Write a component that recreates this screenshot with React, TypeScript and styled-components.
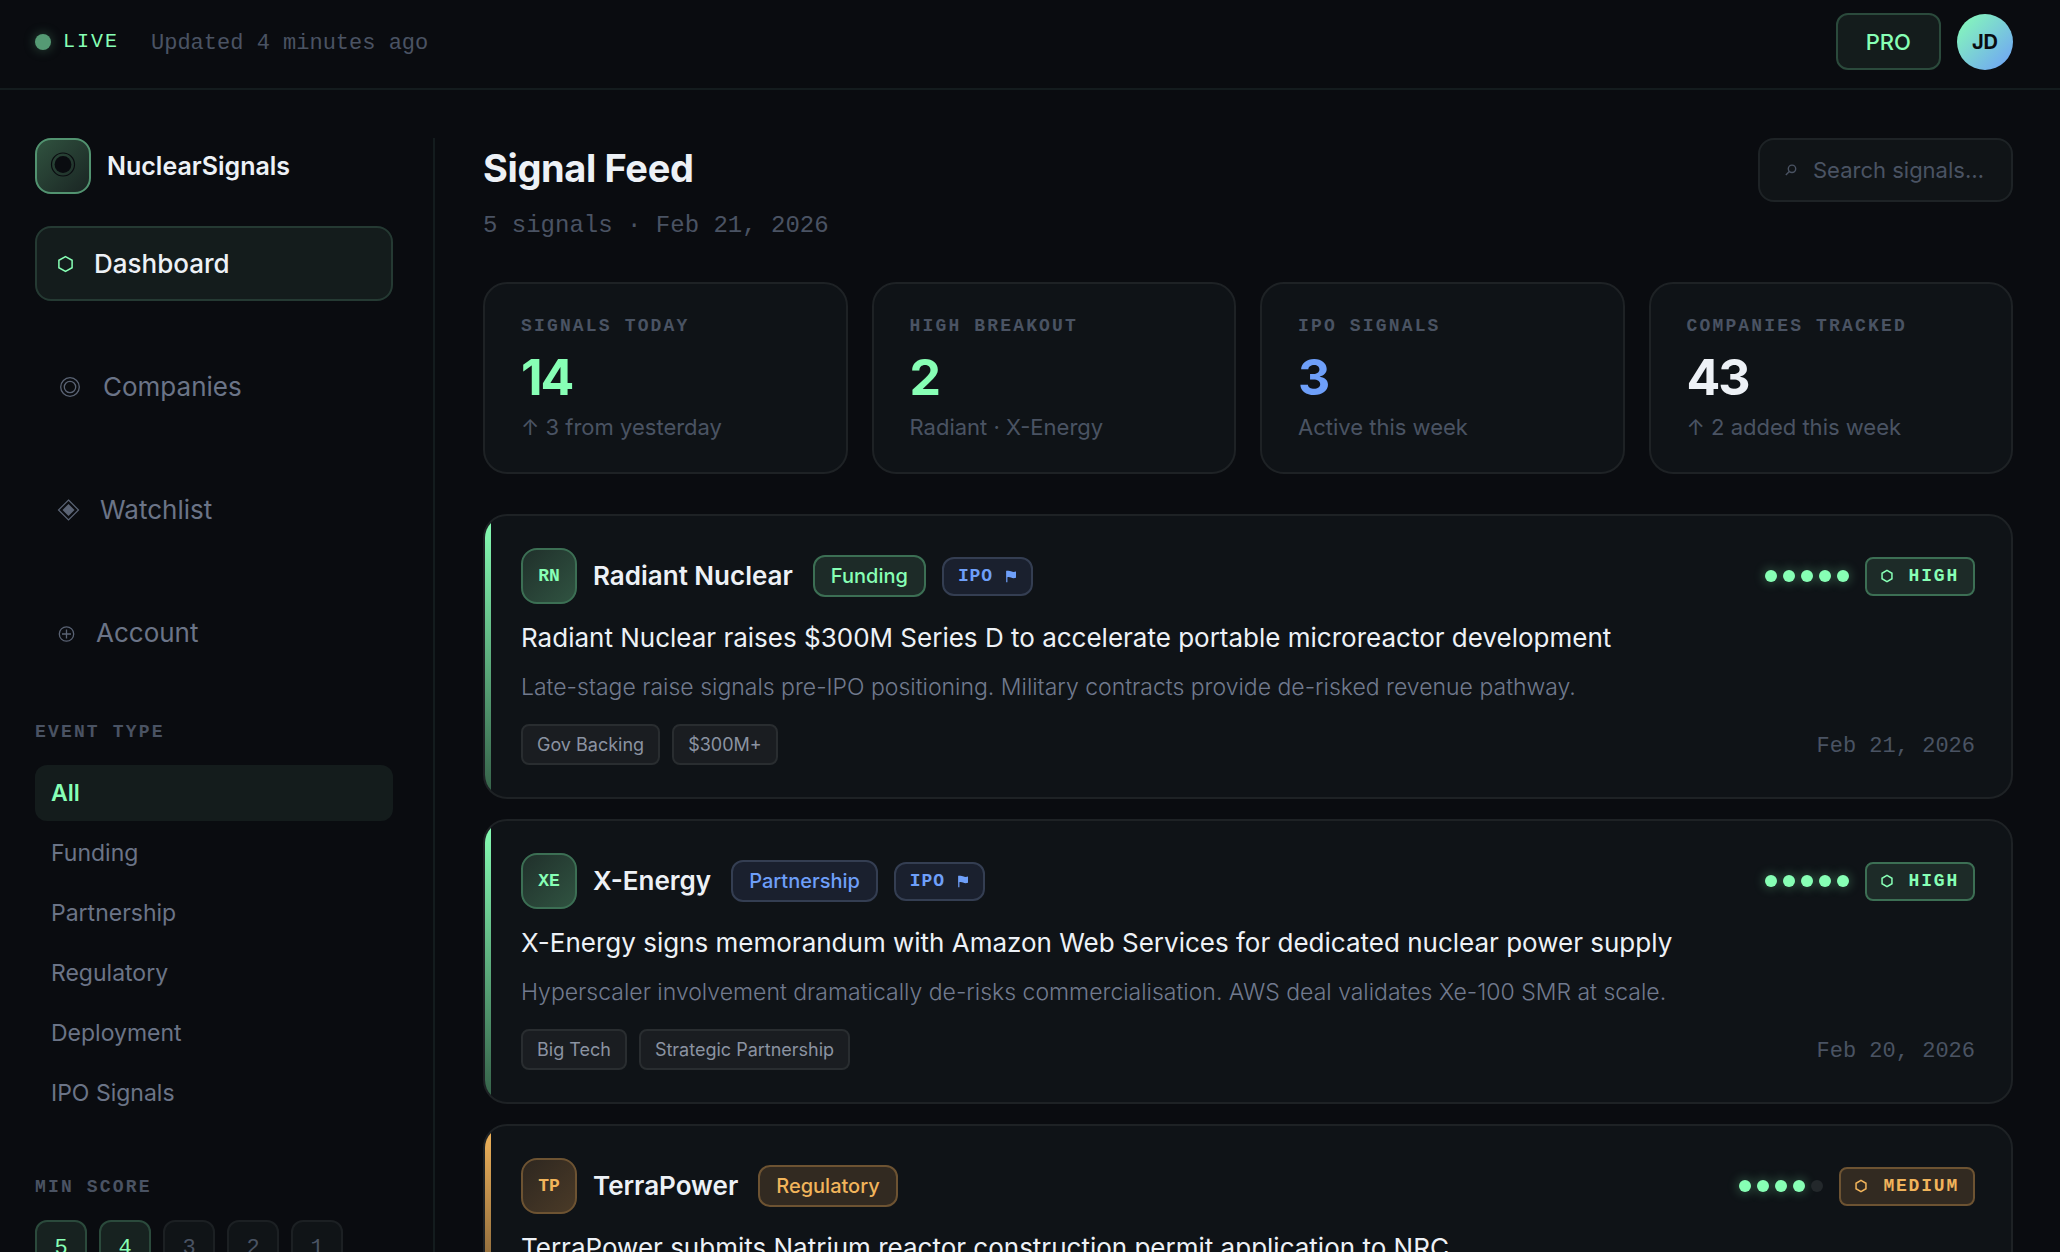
import React, { useState } from "react";
import styled, { createGlobalStyle, css } from "styled-components";

const color = {
  bg: "#0a0c10",
  card: "#0f1317",
  cardBorder: "#1e2225",
  line: "#141c1e",
  text: "#edf1f6",
  muted: "#6b7487",
  dim: "#4a5363",
  green: "#87ffb5",
  blue: "#6e9ff9",
  amber: "#f1b45b",
};

const sans = `Inter, "Open Sans", sans-serif`;
const mono = `"Liberation Mono", "DejaVu Sans Mono", monospace`;

type Tone = "green" | "blue" | "amber";

const tones: Record<Tone, { fg: string; bg: string; border: string }> = {
  green: { fg: color.green, bg: "#1d2b28", border: "#3c6f54" },
  blue: { fg: color.blue, bg: "#1a202e", border: "#343e52" },
  amber: { fg: color.amber, bg: "#322a21", border: "#6d5332" },
};

const GlobalStyle = createGlobalStyle`
  *, *::before, *::after { box-sizing: border-box; }
  body { margin: 0; background: ${color.bg}; color: ${color.text}; font-family: ${sans}; }
  button, input { font: inherit; color: inherit; }
  h1, h2, h3, p, ul { margin: 0; padding: 0; }
  ul { list-style: none; }
`;

const Shell = styled.div`
  display: grid;
  grid-template-rows: auto 1fr;
  height: 100vh;
  overflow: hidden;
`;

const TopBar = styled.header`
  display: flex;
  align-items: center;
  justify-content: space-between;
  padding: 13px 47px 18px 35px;
  border-bottom: 2px solid ${color.line};
`;

const Status = styled.div`
  display: flex;
  align-items: center;
  gap: 32px;
`;

const Live = styled.span`
  display: flex;
  align-items: center;
  gap: 12px;
  font: 400 20px/24px ${mono};
  letter-spacing: 0.1em;
  color: ${color.green};
`;

const LiveDot = styled.i`
  width: 16px;
  height: 16px;
  border-radius: 50%;
  background: #559a74;
  box-shadow: 0 0 12px rgba(85, 154, 116, 0.45);
`;

const Updated = styled.span`
  padding-top: 4px;
  font: 400 22px/24px ${mono};
  color: ${color.dim};
`;

const UserArea = styled.div`
  display: flex;
  align-items: center;
  gap: 16px;
`;

const PlanButton = styled.button`
  height: 57px;
  padding: 0 28px;
  border: 2px solid #2b4a3c;
  border-radius: 12px;
  background: #141c1c;
  color: ${color.green};
  font-size: 22px;
  font-weight: 500;
`;

const UserAvatar = styled.button`
  width: 56px;
  height: 56px;
  padding: 0;
  border: 0;
  border-radius: 50%;
  background: linear-gradient(135deg, ${color.green}, ${color.blue});
  color: ${color.bg};
  font-size: 20px;
  font-weight: 700;
`;

const Body = styled.div`
  display: grid;
  grid-template-columns: 400px 1fr;
  min-height: 0;
  padding: 48px 47px 0 35px;
`;

const Sidebar = styled.aside`
  padding-right: 40px;
  border-right: 2px solid ${color.line};
  overflow: hidden;
`;

const Brand = styled.div`
  display: flex;
  align-items: center;
  gap: 16px;
  margin-bottom: 32px;
  font-size: 25px;
  font-weight: 600;
`;

const BrandMark = styled.span`
  display: grid;
  place-items: center;
  width: 56px;
  height: 56px;
  border: 2px solid #529370;
  border-radius: 16px;
  background: linear-gradient(135deg, #30523f, #1a2523);
`;

const Nav = styled.nav`
  display: flex;
  flex-direction: column;
  gap: 48px;
  margin-bottom: 48px;
`;

const NavLink = styled.a<{ $active?: boolean }>`
  display: flex;
  align-items: center;
  gap: 20px;
  height: 75px;
  padding: 0 20px;
  border: 2px solid transparent;
  border-radius: 16px;
  color: ${color.muted};
  font-size: 26px;
  line-height: 32px;
  text-decoration: none;

  svg {
    color: #5a6374;
  }

  ${(p) =>
    p.$active &&
    css`
      border-color: #253a33;
      background: #141c1c;
      color: ${color.text};
      font-weight: 500;

      svg {
        color: ${color.green};
      }
    `}
`;

const Overline = styled.h2`
  padding-top: 2px;
  font: 700 18px/25px ${mono};
  letter-spacing: 0.12em;
  color: ${color.dim};
`;

const FilterGroup = styled.section`
  display: flow-root;
  margin-bottom: 48px;

  ${Overline} {
    margin-bottom: 20px;
  }
`;

const FilterButton = styled.button<{ $active: boolean }>`
  display: block;
  width: 100%;
  height: 56px;
  margin-bottom: 4px;
  padding: 0 16px;
  border: 0;
  border-radius: 12px;
  background: ${(p) => (p.$active ? "#141c1c" : "transparent")};
  color: ${(p) => (p.$active ? color.green : color.muted)};
  font-size: 23px;
  font-weight: ${(p) => (p.$active ? 600 : 400)};
  text-align: left;
`;

const Scores = styled.div`
  display: flex;
  gap: 12px;
`;

const ScoreButton = styled.button<{ $active: boolean }>`
  width: 52px;
  height: 56px;
  padding: 0;
  border: 2px solid ${(p) => (p.$active ? "#2b4a3c" : "#1c2023")};
  border-radius: 12px;
  background: ${(p) => (p.$active ? "#172220" : "#101417")};
  color: ${(p) => (p.$active ? color.green : color.dim)};
  font-family: ${mono};
  font-size: 22px;
`;

const Main = styled.main`
  min-width: 0;
  padding-left: 48px;
  overflow: hidden;
`;

const PageHead = styled.div`
  display: flex;
  align-items: flex-start;
  justify-content: space-between;
  margin-bottom: 36px;
`;

const Title = styled.h1`
  margin-bottom: 8px;
  font-size: 38px;
  font-weight: 700;
  line-height: 60px;
  letter-spacing: -0.01em;
`;

const Subtitle = styled.p`
  font: 400 24px/40px ${mono};
  color: ${color.dim};
`;

const SearchBox = styled.label`
  display: flex;
  align-items: center;
  gap: 16px;
  height: 64px;
  padding: 0 22px 0 24px;
  border: 2px solid #1e2326;
  border-radius: 16px;
  background: #101417;
  color: ${color.dim};

  input {
    width: 176px;
    padding: 0;
    border: 0;
    outline: 0;
    background: none;
    color: ${color.text};
    font-size: 22px;
  }

  input::placeholder {
    color: ${color.dim};
    opacity: 1;
  }
`;

const Stats = styled.section`
  display: grid;
  grid-template-columns: repeat(4, 1fr);
  gap: 24px;
  margin-bottom: 40px;
`;

const StatCard = styled.article`
  padding: 28px 36px;
  border: 2px solid ${color.cardBorder};
  border-radius: 24px;
  background: ${color.card};
`;

const StatValue = styled.p<{ $color: string }>`
  margin: 12px 0 8px;
  color: ${(p) => p.$color};
  font-size: 50px;
  font-weight: 700;
  line-height: 52px;
  letter-spacing: -0.04em;
`;

const StatNote = styled.p`
  color: ${color.dim};
  font-size: 22px;
  line-height: 33px;
`;

const Feed = styled.section`
  display: flex;
  flex-direction: column;
  gap: 20px;
`;

const SignalCard = styled.article<{ $tone: Tone }>`
  position: relative;
  padding: 32px 36px;
  border: 2px solid ${color.cardBorder};
  border-radius: 24px;
  background: ${color.card};
  overflow: hidden;

  &::before {
    content: "";
    position: absolute;
    inset: 0 auto 0 0;
    width: 6px;
    background: linear-gradient(
      180deg,
      ${(p) => tones[p.$tone].fg},
      ${(p) => (p.$tone === "amber" ? "#6d5332" : "#356048")}
    );
  }
`;

const Row = styled.div`
  display: flex;
  align-items: center;
  gap: 16px;
`;

const CardHead = styled.header`
  display: flex;
  align-items: center;
  justify-content: space-between;
  margin-bottom: 16px;
`;

const Monogram = styled.span<{ $tone: Tone }>`
  display: grid;
  place-items: center;
  width: 56px;
  height: 56px;
  border: 2px solid ${(p) => tones[p.$tone].border};
  border-radius: 16px;
  background: ${(p) =>
    p.$tone === "amber"
      ? "linear-gradient(135deg, #2e2720, #4a3a27)"
      : "linear-gradient(135deg, #20302b, #305341)"};
  color: ${(p) => tones[p.$tone].fg};
  font: 700 18px/24px ${mono};
`;

const Company = styled.h2`
  margin-right: 4px;
  font-size: 26px;
  font-weight: 600;
  line-height: 36px;
`;

const TypeBadge = styled.span<{ $tone: Tone }>`
  padding: 0 16px;
  border: 2px solid ${(p) => tones[p.$tone].border};
  border-radius: 12px;
  background: ${(p) => tones[p.$tone].bg};
  color: ${(p) => tones[p.$tone].fg};
  font-size: 20px;
  font-weight: 500;
  line-height: 38px;
`;

const CodeBadge = styled.span<{ $tone: Tone; $level?: boolean }>`
  display: flex;
  align-items: center;
  gap: ${(p) => (p.$level ? 16 : 12)}px;
  padding: 0 14px;
  border: 2px solid ${(p) => tones[p.$tone].border};
  border-radius: ${(p) => (p.$level ? 8 : 12)}px;
  background: ${(p) => tones[p.$tone].bg};
  color: ${(p) => tones[p.$tone].fg};
  font: 700 18px/35px ${mono};
  letter-spacing: ${(p) => (p.$level ? "0.1em" : "0.05em")};
`;

const Dots = styled.span`
  display: flex;
  gap: 6px;
`;

const Dot = styled.i<{ $on: boolean }>`
  width: 12px;
  height: 12px;
  border-radius: 50%;
  background: ${(p) => (p.$on ? color.green : "#23282b")};
  box-shadow: ${(p) => (p.$on ? "0 0 12px rgba(135, 255, 181, 0.4)" : "none")};
`;

const Headline = styled.h3`
  margin-bottom: 12px;
  font-size: 26px;
  font-weight: 400;
  line-height: 36px;
`;

const Summary = styled.p`
  margin-bottom: 18px;
  color: #717a8e;
  font-size: 23px;
  font-weight: 300;
  line-height: 38px;
`;

const CardFoot = styled.footer`
  display: flex;
  align-items: center;
  justify-content: space-between;
`;

const TagList = styled.ul`
  display: flex;
  gap: 12px;
`;

const Tag = styled.li`
  padding: 0 14px;
  border: 2px solid #292d30;
  border-radius: 8px;
  background: #1a1d21;
  color: #8b93a1;
  font-size: 18px;
  line-height: 37px;
`;

const DateText = styled.time`
  padding-top: 4px;
  font: 400 22px/33px ${mono};
  color: ${color.dim};
`;

const HexIcon = ({ width, height, stroke = 1.5 }: { width: number; height: number; stroke?: number }) => (
  <svg width={width} height={height} viewBox="0 0 16 18" fill="none" stroke="currentColor" strokeWidth={stroke} aria-hidden="true">
    <path d="M8 1.6 14.6 5.3v7.4L8 16.4 1.4 12.7V5.3Z" />
  </svg>
);

const TargetIcon = () => (
  <svg width="26" height="22" viewBox="0 0 26 22" fill="none" stroke="currentColor" strokeWidth="1.3" aria-hidden="true">
    <circle cx="13" cy="11" r="9.3" />
    <circle cx="13" cy="11" r="5.7" />
  </svg>
);

const DiamondIcon = () => (
  <svg width="23" height="22" viewBox="0 0 23 22" fill="none" stroke="currentColor" strokeWidth="1.2" aria-hidden="true">
    <path d="M11.5 1 21.5 11 11.5 21 1.5 11Z" />
    <path d="M11.5 5 17.5 11 11.5 17 5.5 11Z" fill="currentColor" stroke="none" />
  </svg>
);

const PlusCircleIcon = () => (
  <svg width="19" height="18" viewBox="0 0 19 18" fill="none" stroke="currentColor" strokeWidth="1.3" aria-hidden="true">
    <circle cx="9.5" cy="10" r="7.2" />
    <path d="M9.5 5.5v9M5 10h9" />
  </svg>
);

const BrandIcon = () => (
  <svg width="26" height="28" viewBox="0 0 26 28" aria-hidden="true">
    <circle cx="13" cy="12.5" r="11.5" fill="none" stroke="#0a0c10" strokeWidth="1.2" />
    <circle cx="13" cy="12.5" r="8.4" fill="#0a0c10" />
  </svg>
);

const SearchIcon = () => (
  <svg width="13" height="12" viewBox="0 0 13 12" fill="none" stroke="currentColor" strokeWidth="1.4" aria-hidden="true">
    <circle cx="8" cy="4.8" r="3.7" />
    <path d="M5.3 7.5 1.8 11" />
  </svg>
);

const FlagIcon = () => (
  <svg width="12" height="14" viewBox="0 0 12 14" fill="currentColor" aria-hidden="true">
    <path d="M1.2 1.8h1.2v11.400H1.200Z" />
    <path d="M1.6 2C3 1.500 4.600 1.500 6 2.300c1.500.8 3.200.9 5 .3v6.200c-1.800.6-3.500.5-5-.2-1.400-.7-3-.7-4.400-.1Z" />
  </svg>
);

const navItems = [
  { label: "Dashboard", icon: <HexIcon width={17} height={18} /> },
  { label: "Companies", icon: <TargetIcon /> },
  { label: "Watchlist", icon: <DiamondIcon /> },
  { label: "Account", icon: <PlusCircleIcon /> },
];

const eventTypes = ["All", "Funding", "Partnership", "Regulatory", "Deployment", "IPO Signals"];

const stats = [
  { label: "SIGNALS TODAY", value: "14", note: "↑ 3 from yesterday", color: color.green },
  { label: "HIGH BREAKOUT", value: "2", note: "Radiant · X-Energy", color: color.green },
  { label: "IPO SIGNALS", value: "3", note: "Active this week", color: color.blue },
  { label: "COMPANIES TRACKED", value: "43", note: "↑ 2 added this week", color: color.text },
];

type SignalItem = {
  code: string;
  company: string;
  type: string;
  typeTone: Tone;
  ipo: boolean;
  score: number;
  level: string;
  tone: Tone;
  headline: string;
  summary?: string;
  tags: string[];
  date?: string;
};

const signals: SignalItem[] = [
  {
    code: "RN",
    company: "Radiant Nuclear",
    type: "Funding",
    typeTone: "green",
    ipo: true,
    score: 5,
    level: "HIGH",
    tone: "green",
    headline: "Radiant Nuclear raises $300M Series D to accelerate portable microreactor development",
    summary: "Late-stage raise signals pre-IPO positioning. Military contracts provide de-risked revenue pathway.",
    tags: ["Gov Backing", "$300M+"],
    date: "Feb 21, 2026",
  },
  {
    code: "XE",
    company: "X-Energy",
    type: "Partnership",
    typeTone: "blue",
    ipo: true,
    score: 5,
    level: "HIGH",
    tone: "green",
    headline: "X-Energy signs memorandum with Amazon Web Services for dedicated nuclear power supply",
    summary: "Hyperscaler involvement dramatically de-risks commercialisation. AWS deal validates Xe-100 SMR at scale.",
    tags: ["Big Tech", "Strategic Partnership"],
    date: "Feb 20, 2026",
  },
  {
    code: "TP",
    company: "TerraPower",
    type: "Regulatory",
    typeTone: "amber",
    ipo: false,
    score: 4,
    level: "MEDIUM",
    tone: "amber",
    headline: "TerraPower submits Natrium reactor construction permit application to NRC",
    tags: [],
  },
];

const Signal = ({ item }: { item: SignalItem }) => (
  <SignalCard $tone={item.tone}>
    <CardHead>
      <Row>
        <Monogram $tone={item.tone}>{item.code}</Monogram>
        <Company>{item.company}</Company>
        <TypeBadge $tone={item.typeTone}>{item.type}</TypeBadge>
        {item.ipo && (
          <CodeBadge $tone="blue">
            IPO <FlagIcon />
          </CodeBadge>
        )}
      </Row>
      <Row>
        <Dots>
          {[1, 2, 3, 4, 5].map((n) => (
            <Dot key={n} $on={n <= item.score} />
          ))}
        </Dots>
        <CodeBadge $tone={item.tone} $level>
          <HexIcon width={12} height={14} stroke={2} /> {item.level}
        </CodeBadge>
      </Row>
    </CardHead>
    <Headline>{item.headline}</Headline>
    {item.summary && <Summary>{item.summary}</Summary>}
    {item.date && (
      <CardFoot>
        <TagList>
          {item.tags.map((tag) => (
            <Tag key={tag}>{tag}</Tag>
          ))}
        </TagList>
        <DateText>{item.date}</DateText>
      </CardFoot>
    )}
  </SignalCard>
);

export default function App() {
  const [eventType, setEventType] = useState("All");
  const [minScore, setMinScore] = useState(4);

  return (
    <Shell>
      <GlobalStyle />
      <TopBar>
        <Status>
          <Live>
            <LiveDot />
            LIVE
          </Live>
          <Updated>Updated 4 minutes ago</Updated>
        </Status>
        <UserArea>
          <PlanButton>PRO</PlanButton>
          <UserAvatar>JD</UserAvatar>
        </UserArea>
      </TopBar>
      <Body>
        <Sidebar>
          <Brand>
            <BrandMark>
              <BrandIcon />
            </BrandMark>
            NuclearSignals
          </Brand>
          <Nav>
            {navItems.map((item, i) => (
              <NavLink key={item.label} href="#" $active={i === 0}>
                {item.icon}
                {item.label}
              </NavLink>
            ))}
          </Nav>
          <FilterGroup>
            <Overline>EVENT TYPE</Overline>
            {eventTypes.map((type) => (
              <FilterButton key={type} $active={type === eventType} onClick={() => setEventType(type)}>
                {type}
              </FilterButton>
            ))}
          </FilterGroup>
          <FilterGroup>
            <Overline>MIN SCORE</Overline>
            <Scores>
              {[5, 4, 3, 2, 1].map((n) => (
                <ScoreButton key={n} $active={n >= minScore} onClick={() => setMinScore(n)}>
                  {n}
                </ScoreButton>
              ))}
            </Scores>
          </FilterGroup>
        </Sidebar>
        <Main>
          <PageHead>
            <div>
              <Title>Signal Feed</Title>
              <Subtitle>5 signals · Feb 21, 2026</Subtitle>
            </div>
            <SearchBox>
              <SearchIcon />
              <input type="text" placeholder="Search signals…" aria-label="Search signals" />
            </SearchBox>
          </PageHead>
          <Stats>
            {stats.map((s) => (
              <StatCard key={s.label}>
                <Overline>{s.label}</Overline>
                <StatValue $color={s.color}>{s.value}</StatValue>
                <StatNote>{s.note}</StatNote>
              </StatCard>
            ))}
          </Stats>
          <Feed>
            {signals.map((item) => (
              <Signal key={item.code} item={item} />
            ))}
          </Feed>
        </Main>
      </Body>
    </Shell>
  );
}
